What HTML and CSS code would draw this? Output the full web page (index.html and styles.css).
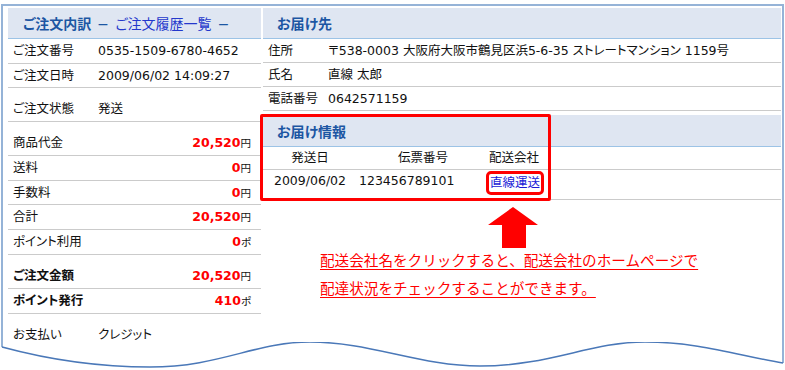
FILE: index.html
```html
<!DOCTYPE html>
<html lang="ja">
<head>
    <meta charset="UTF-8">
    <meta name="viewport" content="width=device-width, initial-scale=1.0">
    <title>ご注文内訳</title>
    <link rel="stylesheet" href="styles.css">
</head>
<body>

    <div class="sheet">
        <div class="cols">

            <div class="col left">
                <div class="head">
                    <b>ご注文内訳</b> <span class="dash">−</span> <a class="history" href="#">ご注文履歴一覧</a> <span class="dash">−</span>
                </div>
                <div class="row"><span class="label">ご注文番号</span><span>0535-1509-6780-4652</span></div>
                <div class="row tight"><span class="label">ご注文日時</span><span>2009/06/02 14:09:27</span></div>
                <div class="row spaced"><span class="label">ご注文状態</span><span>発送</span></div>

                <div class="row spaced money"><span class="label">商品代金</span><span class="price"><b>20,520</b><small>円</small></span></div>
                <div class="row money"><span class="label">送料</span><span class="price"><b>0</b><small>円</small></span></div>
                <div class="row tight money"><span class="label">手数料</span><span class="price"><b>0</b><small>円</small></span></div>
                <div class="row money"><span class="label">合計</span><span class="price"><b>20,520</b><small>円</small></span></div>
                <div class="row money"><span class="label">ポイント利用</span><span class="price"><b>0</b><small>ポ</small></span></div>

                <div class="row spaced money strong"><span class="label">ご注文金額</span><span class="price"><b>20,520</b><small>円</small></span></div>
                <div class="row money strong"><span class="label">ポイント発行</span><span class="price"><b>410</b><small>ポ</small></span></div>
                <div class="row spaced last"><span class="label">お支払い</span><span>クレジット</span></div>
            </div>

            <div class="col right">
                <div class="head"><b>お届け先</b></div>
                <div class="row"><span class="label">住所</span><span>〒538-0003 大阪府大阪市鶴見区浜5-6-35 ストレートマンション 1159号</span></div>
                <div class="row"><span class="label">氏名</span><span>直線 太郎</span></div>
                <div class="row"><span class="label">電話番号</span><span>0642571159</span></div>

                <div class="head sub"><b>お届け情報</b></div>
                <div class="ship head-row">
                    <span>発送日</span><span>伝票番号</span><span>配送会社</span>
                </div>
                <div class="ship data-row">
                    <span>2009/06/02</span><span class="slip">123456789101</span><span><a class="carrier" href="#">直線運送</a></span>
                </div>
                <div class="highlight"></div>

                <div class="note">
                    <svg class="arrow" width="50" height="41" viewBox="0 0 50 41">
                        <polygon points="25,0 50,18 38,18 38,41 14,41 14,18 0,18" fill="#ff0000"/>
                    </svg>
                    <p class="note-text">配送会社名をクリックすると、配送会社のホームページで<br>配達状況をチェックすることができます。</p>
                </div>
            </div>

        </div>
    </div>

    <svg class="wave" width="785" height="28" viewBox="0 0 785 28">
        <path d="M2,0 L2,5" stroke="#95b3d7" stroke-width="2" fill="none"/>
        <path d="M783,0 L783,21" stroke="#95b3d7" stroke-width="2" fill="none"/>
        <path d="M2,5 C50,18 100,25 150,25 C220,25 255,0 310,0 C370,0 420,24 480,24 C550,24 590,0 645,0 C700,0 740,14 783,21" stroke="#4a78b8" stroke-width="1.5" fill="none"/>
    </svg>

</body>
</html>
```

FILE: styles.css
```css
body {
    margin: 0;
    background: #fff;
    color: #111;
    font-family: "DejaVu Sans", "Noto Sans CJK JP", sans-serif;
    font-size: 12.5px;
    font-feature-settings: "palt";
}
.sheet {
    box-sizing: border-box;
    height: 338px;
    margin: 4px 1px 0 1px;
    padding: 2px 1px 0 5px;
    border: 2px solid #95b3d7;
    border-bottom: none;
}
.cols {
    display: flex;
    gap: 2px;
}
.col {
    position: relative;
}
.left { width: 253px; }
.right { width: 518px; }

.head {
    height: 30px;
    line-height: 30px;
    background: #dfe6f2;
    border-bottom: 1px solid #9cc3e6;
    color: #1c56a3;
    font-family: "Noto Sans CJK JP", sans-serif;
    font-size: 14px;
    white-space: nowrap;
}
.left .head { padding-left: 15px; }
.right .head { padding-left: 14px; }
.head .dash {
    font-family: "DejaVu Sans", sans-serif;
    color: #1c56a3;
    padding: 0 3px;
}
.head .history {
    color: #2438cc;
    text-decoration: none;
}
.head.sub {
    margin-top: 4px;
    height: 31px;
    line-height: 33px;
}

.row {
    display: flex;
    line-height: 14px;
    padding: 5px 10px 5px 5px;
    border-bottom: 1px solid #cbcbcb;
    white-space: nowrap;
}
.row.tight { padding-bottom: 4px; }
.row.spaced { padding-top: 14px; }
.row.last { border-bottom: none; }
.right .row { padding-bottom: 4px; }

.left .label { width: 85px; }
.right .label { width: 60px; }
.money { justify-content: space-between; }
.money .label { width: auto; }
.strong .label { font-weight: bold; }

.price b {
    color: #ff0000;
    font-weight: bold;
}
.price small {
    font-size: 10.5px;
    font-family: "Noto Sans CJK JP", sans-serif;
}

.ship {
    display: grid;
    grid-template-columns: 94px 132px 50px;
    line-height: 14px;
    border-bottom: 1px solid #cbcbcb;
    white-space: nowrap;
}
.ship span { text-align: center; }
.head-row { padding: 4px 0; }
.data-row { padding: 4px 0 7px; }
.data-row .slip {
    text-align: left;
    padding-left: 2px;
}
.carrier {
    display: inline-block;
    color: #1a1ad6;
    text-decoration: none;
    line-height: 14px;
    padding: 2px 1px;
    outline: 3px solid #ff0000;
    border-radius: 2px;
}

.highlight {
    position: absolute;
    left: -3px;
    top: 106px;
    width: 285px;
    height: 81px;
    border: 3px solid #ff0000;
    border-radius: 2px;
    pointer-events: none;
}

.note { padding-top: 7px; }
.arrow {
    display: block;
    margin-left: 225px;
}
.note-text {
    margin: -2px 0 0 57px;
    color: #ff0000;
    font-family: "Noto Sans CJK JP", sans-serif;
    font-size: 14.6px;
    font-feature-settings: normal;
    line-height: 28px;
    text-decoration: underline;
    text-decoration-thickness: 1px;
    text-underline-offset: 3px;
    white-space: nowrap;
}

.wave { display: block; }
```
